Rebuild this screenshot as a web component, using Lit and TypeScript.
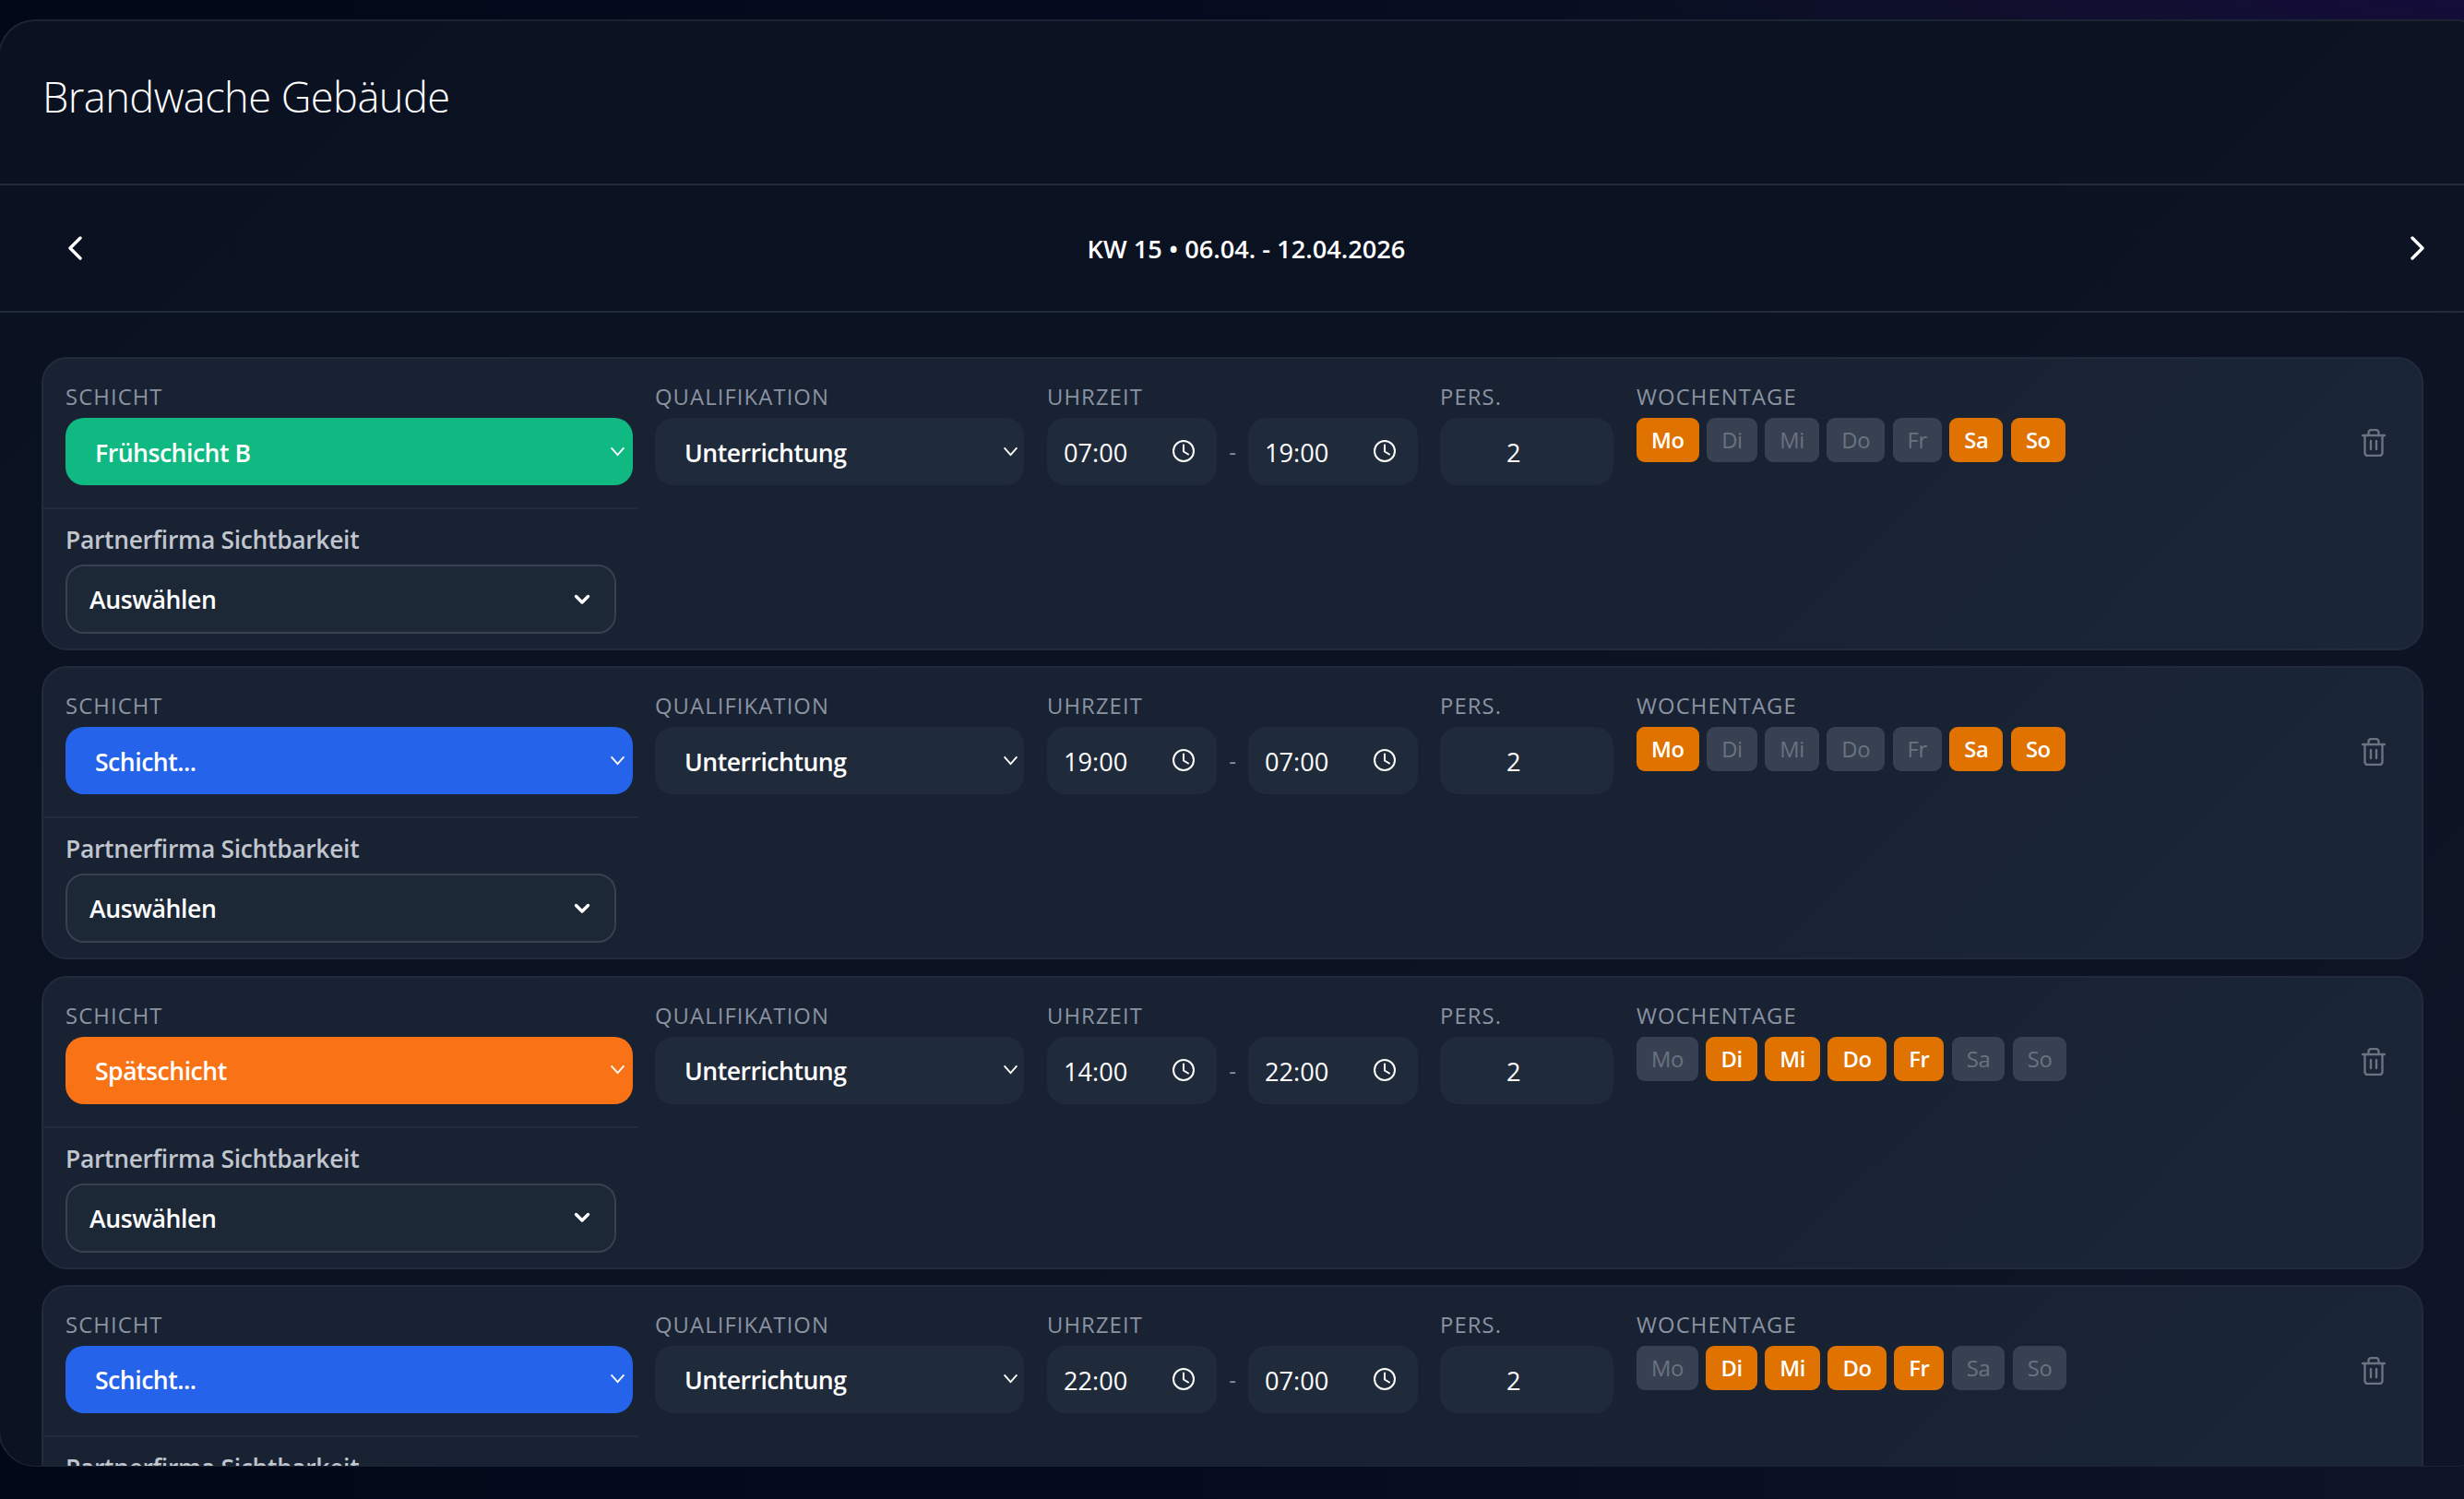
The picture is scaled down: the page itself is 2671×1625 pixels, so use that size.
import { LitElement, html, css, svg } from 'lit';
import { customElement } from 'lit/decorators.js';

interface Shift {
  name: string;
  tone: string;
  from: string;
  to: string;
  days: string[];
}

const DAYS = ['Mo', 'Di', 'Mi', 'Do', 'Fr', 'Sa', 'So'];

const SHIFTS: Shift[] = [
  { name: 'Frühschicht B', tone: 'green', from: '07:00', to: '19:00', days: ['Mo', 'Sa', 'So'] },
  { name: 'Schicht...', tone: 'blue', from: '19:00', to: '07:00', days: ['Mo', 'Sa', 'So'] },
  { name: 'Spätschicht', tone: 'orange', from: '14:00', to: '22:00', days: ['Di', 'Mi', 'Do', 'Fr'] },
  { name: 'Schicht...', tone: 'blue', from: '22:00', to: '07:00', days: ['Di', 'Mi', 'Do', 'Fr'] },
];

const thinChevron = html`<svg class="thin" viewBox="0 0 18 12" fill="none" stroke="currentColor" stroke-width="2">
  ${svg`<polyline points="1.5,1.5 9,10 16.5,1.5"></polyline>`}
</svg>`;

const clock = html`<svg class="clock" viewBox="0 0 24 24" fill="none" stroke="currentColor" stroke-width="2" stroke-linecap="round" stroke-linejoin="round">
  ${svg`<circle cx="12" cy="12" r="11"></circle><polyline points="12,5.5 12,12.5 17,15.5"></polyline>`}
</svg>`;

const trash = html`<svg class="trash" viewBox="0 0 26 30" fill="none" stroke="currentColor" stroke-width="2.4" stroke-linecap="round" stroke-linejoin="round">
  ${svg`<path d="M1 7h24"></path><path d="M3.5 7v19a3 3 0 0 0 3 3h13a3 3 0 0 0 3-3V7"></path><path d="M7.5 7V4a3 3 0 0 1 3-3h5a3 3 0 0 1 3 3v3"></path><path d="M10 13v9"></path><path d="M16 13v9"></path>`}
</svg>`;

@customElement('app-root')
export class AppRoot extends LitElement {
  static styles = css`
    :host {
      display: block;
      height: 1625px;
      overflow: hidden;
      box-sizing: border-box;
      padding: 21px 0 35px;
      background:
        radial-gradient(ellipse 900px 120px at 100% 0, #150c3a 0%, rgba(21, 12, 58, 0) 100%),
        linear-gradient(90deg, #030818 0%, #050b1e 45%, #0f1526 100%);
      font-family: 'Open Sans', 'Noto Sans', sans-serif;
      color: #fff;
    }
    .panel {
      width: 2704px;
      margin-left: -2px;
      height: 100%;
      box-sizing: border-box;
      border: 2px solid #1b2433;
      border-bottom-width: 1px;
      border-radius: 40px;
      overflow: hidden;
      background: linear-gradient(135deg, #0a1120 0%, #0b1222 50%, #0f1526 100%);
      display: flex;
      flex-direction: column;
    }
    .head {
      height: 178px;
      flex: none;
      box-sizing: border-box;
      padding: 0 46px;
      display: flex;
      align-items: center;
      border-bottom: 2px solid #222b3b;
    }
    h1 {
      margin: 0 0 12px;
      font-size: 45.2px;
      font-weight: 300;
      letter-spacing: -0.55px;
      line-height: 1.2;
    }
    .nav {
      height: 138px;
      flex: none;
      box-sizing: border-box;
      padding: 0 72px 0 74px;
      display: flex;
      align-items: center;
      justify-content: space-between;
      border-bottom: 2px solid #222b3b;
    }
    .nav svg {
      width: 15px;
      height: 26px;
    }
    .week {
      font-size: 27.2px;
      font-weight: 600;
    }
    .list {
      padding: 48px 73px 0 45px;
      display: flex;
      flex-direction: column;
      gap: 17.3px;
    }
    .card {
      flex: none;
      height: 318px;
      box-sizing: border-box;
      border: 2px solid #212b3c;
      border-radius: 28px;
      background: linear-gradient(135deg, #182233 0%, #182233 70%, #1a2637 100%);
      display: flex;
    }
    .left {
      width: 645px;
      flex: none;
    }
    .shift-box {
      padding: 25px 0 24px 24px;
      border-bottom: 2px solid #212b3c;
    }
    .col {
      padding-top: 25px;
    }
    .label {
      height: 33px;
      line-height: 33px;
      margin-bottom: 6px;
      font-size: 23.8px;
      font-weight: 500;
      letter-spacing: 1.1px;
      color: #8b93a1;
      text-transform: uppercase;
      white-space: nowrap;
    }
    .field {
      height: 73px;
      box-sizing: border-box;
      border-radius: 20px;
      background: #1f2a3a;
      font-size: 27.2px;
      display: flex;
      align-items: center;
      white-space: nowrap;
    }
    .field span {
      padding-top: 2px;
    }
    .select {
      font-size: 26.6px;
      font-weight: 600;
      letter-spacing: -0.5px;
      padding: 0 6px 0 32px;
      justify-content: space-between;
    }
    .thin {
      width: 17px;
      height: 11px;
      margin-top: -1px;
    }
    .shift {
      width: 615px;
      padding-right: 8px;
    }
    .green { background: #10b981; }
    .blue { background: #2563eb; }
    .orange { background: #f97316; }
    .partner {
      padding: 11px 0 0 24px;
    }
    .partner-label {
      height: 44px;
      line-height: 44px;
      margin-bottom: 5px;
      font-size: 26.4px;
      font-weight: 600;
      letter-spacing: -0.3px;
      color: #c0c5ce;
      white-space: nowrap;
    }
    .choose {
      width: 597px;
      height: 75px;
      box-sizing: border-box;
      border: 2px solid #374151;
      border-radius: 20px;
      background: #1d2837;
      padding: 0 26px 0 24px;
      font-size: 26.6px;
      font-weight: 600;
      letter-spacing: -0.4px;
      display: flex;
      align-items: center;
      justify-content: space-between;
    }
    .choose span {
      padding-top: 1px;
    }
    .choose svg {
      width: 18px;
      height: 12px;
    }
    .qual {
      width: 400px;
      margin-left: 18px;
    }
    .time {
      width: 402px;
      margin-left: 25px;
    }
    .times {
      display: flex;
      align-items: center;
    }
    .dash {
      width: 34px;
      text-align: center;
      color: #8b93a1;
      font-size: 24px;
    }
    .tfield {
      width: 184px;
      padding: 0 24px 0 18px;
      box-sizing: border-box;
      justify-content: space-between;
    }
    .clock {
      width: 24px;
      height: 24px;
      margin-top: -1px;
    }
    .pers {
      width: 188px;
      margin-left: 24px;
    }
    .pers .field {
      padding-left: 72px;
      box-sizing: border-box;
    }
    .days-col {
      margin-left: 25px;
    }
    .days {
      display: flex;
      gap: 8.5px;
    }
    .day {
      height: 48px;
      box-sizing: border-box;
      padding: 0 16px;
      border-radius: 9px;
      background: #374151;
      color: #6b7280;
      font-size: 23.8px;
      letter-spacing: -0.4px;
      display: flex;
      align-items: center;
    }
    .day.on {
      background: #e07200;
      color: #fff;
      font-weight: 600;
    }
    .del {
      margin: 76px 39px 0 auto;
      color: #6b7280;
    }
    .trash {
      display: block;
      width: 26px;
      height: 30px;
    }
  `;

  private renderRow(s: Shift) {
    return html`
      <div class="card">
        <div class="left">
          <div class="shift-box">
            <div class="label">Schicht</div>
            <div class="field select shift ${s.tone}"><span>${s.name}</span>${thinChevron}</div>
          </div>
          <div class="partner">
            <div class="partner-label">Partnerfirma Sichtbarkeit</div>
            <div class="choose">
              <span>Auswählen</span>
              <svg viewBox="0 0 18 12" fill="none" stroke="currentColor" stroke-width="3.4" stroke-linecap="round" stroke-linejoin="round">
                ${svg`<polyline points="2.5,2.5 9,9 15.5,2.5"></polyline>`}
              </svg>
            </div>
          </div>
        </div>
        <div class="col qual">
          <div class="label">Qualifikation</div>
          <div class="field select"><span>Unterrichtung</span>${thinChevron}</div>
        </div>
        <div class="col time">
          <div class="label">Uhrzeit</div>
          <div class="times">
            <div class="field tfield"><span>${s.from}</span>${clock}</div>
            <span class="dash">-</span>
            <div class="field tfield"><span>${s.to}</span>${clock}</div>
          </div>
        </div>
        <div class="col pers">
          <div class="label">Pers.</div>
          <div class="field"><span>2</span></div>
        </div>
        <div class="col days-col">
          <div class="label">Wochentage</div>
          <div class="days">
            ${DAYS.map((d) => html`<div class="day ${s.days.includes(d) ? 'on' : ''}">${d}</div>`)}
          </div>
        </div>
        <div class="del">${trash}</div>
      </div>
    `;
  }

  render() {
    return html`
      <div class="panel">
        <div class="head"><h1>Brandwache Gebäude</h1></div>
        <div class="nav">
          <svg viewBox="0 0 15 26" fill="none" stroke="#fff" stroke-width="3.4" stroke-linecap="round" stroke-linejoin="round">
            ${svg`<polyline points="13,2 2,13 13,24"></polyline>`}
          </svg>
          <span class="week">KW 15 • 06.04. - 12.04.2026</span>
          <svg viewBox="0 0 15 26" fill="none" stroke="#fff" stroke-width="3.4" stroke-linecap="round" stroke-linejoin="round">
            ${svg`<polyline points="2,2 13,13 2,24"></polyline>`}
          </svg>
        </div>
        <div class="list">${SHIFTS.map((s) => this.renderRow(s))}</div>
      </div>
    `;
  }
}
